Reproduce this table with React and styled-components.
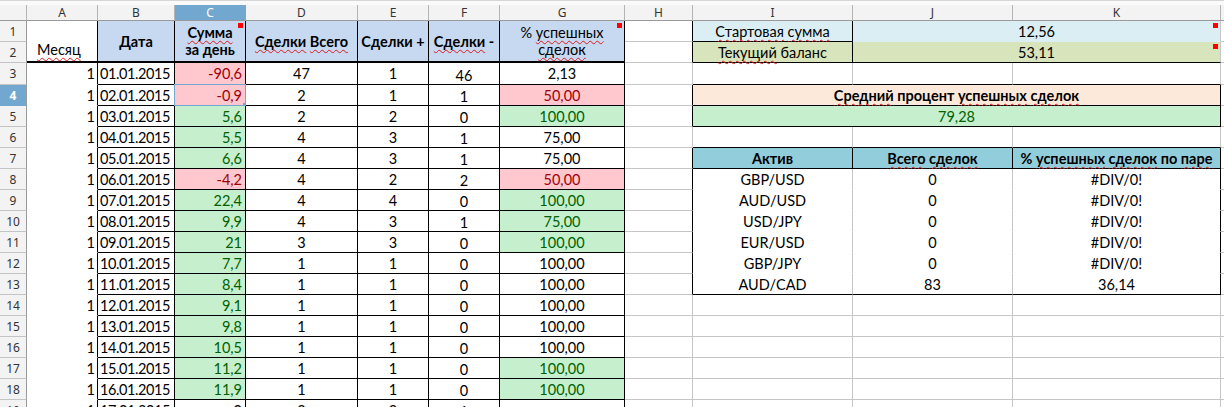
import React from "react";
import styled, { createGlobalStyle } from "styled-components";

const GRID = "#c6c6c6";
const BLACK = "#000";
const HEAD_BLUE = "#c6d9f1";
const SEL = "#72a8cf";
const RED_FILL = "#ffc7ce";
const RED_INK = "#9c0006";
const GREEN_FILL = "#c6efce";
const GREEN_INK = "#006100";

const GlobalStyle = createGlobalStyle`
  html, body { margin: 0; padding: 0; background: #fff; }
  body { width: 1224px; height: 407px; overflow: hidden; }
`;

const Sheet = styled.div`
  display: grid;
  grid-template-columns: 27px 71px 77px 71px 112px 71px 71px 125px 68px 160px 160px 208px 1fr;
  grid-template-rows: 5px 16px 21px 21px 22px repeat(16, 21px);
  width: 1224px;
  height: 407px;
  overflow: hidden;
  background: #fff;
  font-family: Lato, "Liberation Sans", sans-serif;
  font-size: 14.5px;
`;

const TopStrip = styled.div`
  grid-column: 1 / -1;
  grid-row: 1;
  background: #fafafa;
  border-top: 1px solid #d6d6d6;
`;

const ColHead = styled.div`
  grid-column: ${(p) => p.$c};
  grid-row: 2;
  display: flex;
  align-items: center;
  justify-content: center;
  background: ${(p) => (p.$sel ? SEL : "#f3f3f3")};
  color: ${(p) => (p.$sel ? "#fff" : "#333")};
  border-right: 1px solid ${(p) => (p.$sel ? SEL : "#b4b4b4")};
  border-bottom: 1px solid #9a9a9a;
  font-family: "Noto Sans", sans-serif;
  font-size: 12px;
  line-height: 14px;
`;

const RowHead = styled.div`
  grid-column: 1;
  grid-row: ${(p) => p.$r};
  display: flex;
  align-items: center;
  justify-content: center;
  background: ${(p) => (p.$sel ? SEL : "#f3f3f3")};
  color: ${(p) => (p.$sel ? "#fff" : "#333")};
  border-right: 1px solid #9a9a9a;
  border-bottom: 1px solid ${(p) => (p.$sel ? SEL : "#c4c4c4")};
  font-family: "Noto Sans", sans-serif;
  font-size: 12px;
  font-weight: ${(p) => (p.$sel ? 700 : 400)};
`;

const justify = { left: "flex-start", center: "center", right: "flex-end" };
const valign = { top: "flex-start", center: "center", bottom: "flex-end" };

const Cell = styled.div`
  grid-column: ${(p) => p.$c} / span ${(p) => p.$cs || 1};
  grid-row: ${(p) => p.$r} / span ${(p) => p.$rs || 1};
  position: relative;
  display: flex;
  align-items: ${(p) => valign[p.$v || "center"]};
  justify-content: ${(p) => justify[p.$align || "left"]};
  text-align: ${(p) => p.$align || "left"};
  padding: ${(p) => p.$pad || "0 3px"};
  background: ${(p) => p.$fill || "#fff"};
  color: ${(p) => p.$ink || "#000"};
  font-weight: ${(p) => (p.$bold ? 700 : 400)};
  letter-spacing: ${(p) => p.$track || "normal"};
  border-right: 1px solid ${(p) => p.$rb || GRID};
  border-bottom: ${(p) => p.$bw || 1}px solid ${(p) => p.$bb || GRID};
  line-height: 17px;
  white-space: nowrap;
`;

const Spell = styled.span`
  text-decoration: underline wavy #e01b1b;
  text-decoration-thickness: 1px;
  text-underline-offset: 2px;
  text-decoration-skip-ink: none;
`;

const Note = styled.span`
  position: absolute;
  top: 2px;
  right: 2px;
  width: 5px;
  height: 5px;
  background: #ff0000;
`;

const Selection = styled.span`
  position: absolute;
  inset: -1px -1px -1px -1px;
  border: 1px solid ${SEL};
  pointer-events: none;

  &::after {
    content: "";
    position: absolute;
    right: -3px;
    bottom: -3px;
    width: 5px;
    height: 5px;
    background: ${SEL};
  }
`;

const C = { A: 2, B: 3, C: 4, D: 5, E: 6, F: 7, G: 8, H: 9, I: 10, J: 11, K: 12, L: 13 };
const row = (n) => n + 2;

const tone = {
  neg: { fill: RED_FILL, ink: RED_INK },
  pos: { fill: GREEN_FILL, ink: GREEN_INK },
};

// date, sum, total, plus, minus, percent, sum tone, percent tone
const days = [
  ["01.01.2015", "-90,6", 47, 1, 46, "2,13", "neg", null],
  ["02.01.2015", "-0,9", 2, 1, 1, "50,00", "neg", "neg"],
  ["03.01.2015", "5,6", 2, 2, 0, "100,00", "pos", "pos"],
  ["04.01.2015", "5,5", 4, 3, 1, "75,00", "pos", null],
  ["05.01.2015", "6,6", 4, 3, 1, "75,00", "pos", null],
  ["06.01.2015", "-4,2", 4, 2, 2, "50,00", "neg", "neg"],
  ["07.01.2015", "22,4", 4, 4, 0, "100,00", "pos", "pos"],
  ["08.01.2015", "9,9", 4, 3, 1, "75,00", "pos", "pos"],
  ["09.01.2015", "21", 3, 3, 0, "100,00", "pos", "pos"],
  ["10.01.2015", "7,7", 1, 1, 0, "100,00", "pos", null],
  ["11.01.2015", "8,4", 1, 1, 0, "100,00", "pos", null],
  ["12.01.2015", "9,1", 1, 1, 0, "100,00", "pos", null],
  ["13.01.2015", "9,8", 1, 1, 0, "100,00", "pos", null],
  ["14.01.2015", "10,5", 1, 1, 0, "100,00", "pos", null],
  ["15.01.2015", "11,2", 1, 1, 0, "100,00", "pos", "pos"],
  ["16.01.2015", "11,9", 1, 1, 0, "100,00", "pos", "pos"],
  ["17.01.2015", "0", 2, 2, 1, "", null, null],
];

const pairs = [
  ["GBP/USD", "0", "#DIV/0!"],
  ["AUD/USD", "0", "#DIV/0!"],
  ["USD/JPY", "0", "#DIV/0!"],
  ["EUR/USD", "0", "#DIV/0!"],
  ["GBP/JPY", "0", "#DIV/0!"],
  ["AUD/CAD", "83", "36,14"],
];

const letters = ["A", "B", "C", "D", "E", "F", "G", "H", "I", "J", "K", ""];

// black left edge of the right-hand tables sits on column H
const hRight = (n) => ([1, 2, 4, 5].includes(n) || (n >= 7 && n <= 13) ? BLACK : GRID);

const LeftHeader = () => (
  <>
    <Cell $c={C.A} $r={row(1)} $rs={2} $v="bottom" $pad="0 0 3px 10px" $rb={BLACK} $bb={BLACK} $bw={2}>
      <Spell>Месяц</Spell>
    </Cell>
    <Cell $c={C.B} $r={row(1)} $rs={2} $align="center" $bold $fill={HEAD_BLUE} $rb={BLACK} $bb={BLACK} $bw={2}>
      Дата
    </Cell>
    <Cell $c={C.C} $r={row(1)} $rs={2} $align="center" $bold $fill={HEAD_BLUE} $rb={BLACK} $bb={BLACK} $bw={2}>
      <span>
        <Spell>Сумма</Spell>
        <br />
        за день
      </span>
      <Note />
    </Cell>
    <Cell $c={C.D} $r={row(1)} $rs={2} $align="center" $bold $fill={HEAD_BLUE} $rb={BLACK} $bb={BLACK} $bw={2}>
      <span>
        <Spell>Сделки</Spell> <Spell>Всего</Spell>
      </span>
    </Cell>
    <Cell $c={C.E} $r={row(1)} $rs={2} $align="center" $bold $fill={HEAD_BLUE} $rb={BLACK} $bb={BLACK} $bw={2}>
      Сделки +
    </Cell>
    <Cell $c={C.F} $r={row(1)} $rs={2} $align="center" $bold $fill={HEAD_BLUE} $rb={BLACK} $bb={BLACK} $bw={2}>
      <span>
        <Spell>Сделки</Spell> -
      </span>
    </Cell>
    <Cell $c={C.G} $r={row(1)} $rs={2} $align="center" $fill={HEAD_BLUE} $rb={BLACK} $bb={BLACK} $bw={2}>
      <span>
        % <Spell>успешных</Spell>
        <br />
        <Spell>сделок</Spell>
      </span>
      <Note />
    </Cell>
  </>
);

const LeftRows = () =>
  days.map(([date, sum, total, plus, minus, pct, sumTone, pctTone], i) => {
    const r = row(3 + i);
    const s = sumTone ? tone[sumTone] : {};
    const g = pctTone ? tone[pctTone] : {};
    return (
      <React.Fragment key={date}>
        <Cell $c={C.A} $r={r} $align="right" $pad="0 2px" $rb={BLACK} $bb="#fff">1</Cell>
        <Cell $c={C.B} $r={r} $pad="0 2px" $track="-0.4px" $rb={BLACK} $bb={BLACK}>{date}</Cell>
        <Cell $c={C.C} $r={r} $align="right" $fill={s.fill} $ink={s.ink} $rb={BLACK} $bb={BLACK}>
          {sum}
          {i === 1 && <Selection />}
        </Cell>
        <Cell $c={C.D} $r={r} $align="center" $rb={BLACK} $bb={BLACK}>{total}</Cell>
        <Cell $c={C.E} $r={r} $align="center" $rb={BLACK} $bb={BLACK}>{plus}</Cell>
        <Cell $c={C.F} $r={r} $align="center" $pad="3px 3px 0" $rb={BLACK} $bb={BLACK}>{minus}</Cell>
        <Cell $c={C.G} $r={r} $align="center" $fill={g.fill} $ink={g.ink} $rb={BLACK} $bb={BLACK}>{pct}</Cell>
      </React.Fragment>
    );
  });

const RightTables = () => {
  const cells = [];
  for (let n = 1; n <= 19; n++) {
    cells.push(<Cell key={`h${n}`} $c={C.H} $r={row(n)} $rb={hRight(n)} />);
    cells.push(<Cell key={`l${n}`} $c={C.L} $r={row(n)} />);
  }
  // empty spacer rows above the boxed blocks
  [3, 6].forEach((n) => {
    cells.push(<Cell key={`i${n}`} $c={C.I} $r={row(n)} $bb={BLACK} />);
    cells.push(<Cell key={`j${n}`} $c={C.J} $r={row(n)} $bb={BLACK} />);
    cells.push(<Cell key={`k${n}`} $c={C.K} $r={row(n)} $bb={BLACK} />);
  });
  for (let n = 14; n <= 19; n++) {
    cells.push(<Cell key={`i${n}`} $c={C.I} $r={row(n)} />);
    cells.push(<Cell key={`j${n}`} $c={C.J} $r={row(n)} />);
    cells.push(<Cell key={`k${n}`} $c={C.K} $r={row(n)} />);
  }
  return (
    <>
      {cells}
      <Cell $c={C.I} $r={row(1)} $align="center" $fill="#daeef3" $rb={BLACK} $bb={BLACK}>
        <span>
          <Spell>Стартовая</Spell> <Spell>сумма</Spell>
        </span>
      </Cell>
      <Cell $c={C.J} $r={row(1)} $cs={2} $align="center" $fill="#daeef3" $bb="#daeef3">
        12,56
        <Note />
      </Cell>
      <Cell $c={C.I} $r={row(2)} $align="center" $fill="#d8e4bc" $rb={BLACK} $bb={BLACK}>
        <span>
          <Spell>Текущий</Spell> баланс
        </span>
      </Cell>
      <Cell $c={C.J} $r={row(2)} $cs={2} $align="center" $fill="#d8e4bc" $bb={BLACK}>
        53,11
        <Note />
      </Cell>

      <Cell $c={C.I} $r={row(4)} $cs={3} $align="center" $bold $fill="#fde9d9" $rb={BLACK} $bb={BLACK}>
        <span>
          <Spell>Средний</Spell> процент <Spell>успешных</Spell> <Spell>сделок</Spell>
        </span>
      </Cell>
      <Cell $c={C.I} $r={row(5)} $cs={3} $align="center" $fill={GREEN_FILL} $ink={GREEN_INK} $rb={BLACK} $bb={BLACK}>
        79,28
      </Cell>

      <Cell $c={C.I} $r={row(7)} $align="center" $bold $fill="#92cddc" $rb={BLACK} $bb={BLACK}>
        Актив
      </Cell>
      <Cell $c={C.J} $r={row(7)} $align="center" $bold $fill="#92cddc" $rb={BLACK} $bb={BLACK}>
        <span>
          <Spell>Всего</Spell> <Spell>сделок</Spell>
        </span>
      </Cell>
      <Cell $c={C.K} $r={row(7)} $align="center" $bold $fill="#92cddc" $rb={BLACK} $bb={BLACK}>
        <span>
          % <Spell>успешных</Spell> <Spell>сделок</Spell> по <Spell>паре</Spell>
        </span>
      </Cell>
      {pairs.map(([asset, count, pct], i) => {
        const r = row(8 + i);
        const last = i === pairs.length - 1;
        const bb = last ? BLACK : "#fff";
        return (
          <React.Fragment key={asset}>
            <Cell $c={C.I} $r={r} $align="center" $bb={bb}>{asset}</Cell>
            <Cell $c={C.J} $r={r} $align="center" $bb={bb}>{count}</Cell>
            <Cell $c={C.K} $r={r} $align="center" $rb={BLACK} $bb={bb}>{pct}</Cell>
          </React.Fragment>
        );
      })}
    </>
  );
};

export default function App() {
  return (
    <>
      <GlobalStyle />
      <Sheet>
        <TopStrip />
        <ColHead $c={1} />
        {letters.map((l, i) => (
          <ColHead key={i} $c={i + 2} $sel={l === "C"}>
            {l}
          </ColHead>
        ))}
        {Array.from({ length: 19 }, (_, i) => (
          <RowHead key={i} $r={row(i + 1)} $sel={i + 1 === 4}>
            {i + 1}
          </RowHead>
        ))}
        <LeftHeader />
        <LeftRows />
        <RightTables />
      </Sheet>
    </>
  );
}
